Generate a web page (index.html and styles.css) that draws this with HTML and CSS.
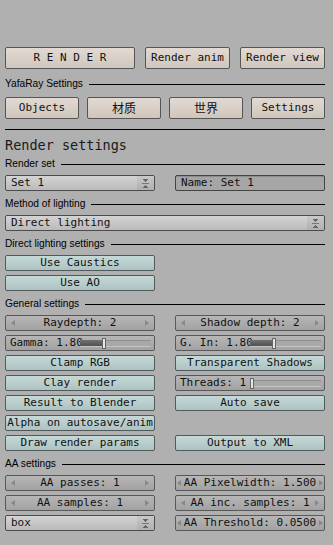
FILE: index.html
```html
<!DOCTYPE html>
<html lang="en">
<head>
  <meta charset="UTF-8">
  <meta name="viewport" content="width=device-width,initial-scale=1.0">
  <title>YafaRay Settings</title>
  <link rel="stylesheet" href="styles.css">
</head>
<body>

<div class="panel">

  <!-- render buttons -->
  <div class="row top">
    <div class="btn beige">R E N D E R</div>
    <div class="btn beige">Render anim</div>
    <div class="btn beige">Render view</div>
  </div>

  <div class="label first">YafaRay Settings</div>
  <div class="row tabs">
    <div class="btn beige">Objects</div>
    <div class="btn beige cjk">材质</div>
    <div class="btn beige cjk">世界</div>
    <div class="btn beige">Settings</div>
  </div>

  <div class="rule"></div>
  <div class="title">Render settings</div>

  <!-- Render set -->
  <div class="label">Render set</div>
  <div class="row">
    <div class="btn menu"><span>Set 1</span><i class="updown"></i></div>
    <div class="btn field">Name: Set 1</div>
  </div>

  <div class="label">Method of lighting</div>
  <div class="row one">
    <div class="btn menu"><span>Direct lighting</span><i class="updown"></i></div>
  </div>

  <div class="label">Direct lighting settings</div>
  <div class="row">
    <div class="btn tog">Use Caustics</div>
  </div>
  <div class="row">
    <div class="btn tog">Use AO</div>
  </div>

  <!-- General -->
  <div class="label">General settings</div>
  <div class="row">
    <div class="btn num"><i class="arr l"></i><span>Raydepth: 2</span><i class="arr r"></i></div>
    <div class="btn num"><i class="arr l"></i><span>Shadow depth: 2</span><i class="arr r"></i></div>
  </div>
  <div class="row">
    <div class="btn slider"><span class="val">Gamma: 1.80</span><span class="track"><span class="fill" style="width:22px"></span><span class="knob"></span></span></div>
    <div class="btn slider"><span class="val">G. In: 1.80</span><span class="track"><span class="fill" style="width:22px"></span><span class="knob"></span></span></div>
  </div>
  <div class="row">
    <div class="btn tog">Clamp RGB</div>
    <div class="btn tog">Transparent Shadows</div>
  </div>
  <div class="row">
    <div class="btn tog">Clay render</div>
    <div class="btn slider"><span class="val">Threads: 1</span><span class="track"><span class="fill" style="width:0"></span><span class="knob"></span></span></div>
  </div>
  <div class="row">
    <div class="btn tog">Result to Blender</div>
    <div class="btn tog">Auto save</div>
  </div>
  <div class="row">
    <div class="btn tog">Alpha on autosave/anim</div>
  </div>
  <div class="row">
    <div class="btn tog">Draw render params</div>
    <div class="btn tog">Output to XML</div>
  </div>

  <!-- AA -->
  <div class="label">AA settings</div>
  <div class="row">
    <div class="btn num"><i class="arr l"></i><span>AA passes: 1</span><i class="arr r"></i></div>
    <div class="btn num tight"><i class="arr l"></i><span>AA Pixelwidth: 1.500</span><i class="arr r"></i></div>
  </div>
  <div class="row">
    <div class="btn num"><i class="arr l"></i><span>AA samples: 1</span><i class="arr r"></i></div>
    <div class="btn num"><i class="arr l"></i><span>AA inc. samples: 1</span><i class="arr r"></i></div>
  </div>
  <div class="row">
    <div class="btn menu"><span>box</span><i class="updown"></i></div>
    <div class="btn num tight"><i class="arr l"></i><span>AA Threshold: 0.0500</span><i class="arr r"></i></div>
  </div>

</div>

</body>
</html>
```

FILE: styles.css
```css
body { margin:0; background:#b0b0b0; color:#000;
  font-family:"DejaVu Sans Mono", "Noto Sans CJK SC", monospace; font-size:11px; }

.panel { width:320px; margin-left:5px; padding-top:47px; }

/* rows */
.row { display:grid; grid-template-columns:150px 150px; column-gap:20px; margin-bottom:4px; }
.row.one { grid-template-columns:320px; }
.row.top { grid-template-columns:130px 85px 85px; column-gap:10px; margin-bottom:0; }
.row.tabs { grid-template-columns:repeat(4, 74px); column-gap:8px; margin-bottom:0; }

/* section labels */
.label { display:flex; align-items:center; height:20px; line-height:18px; padding-bottom:2px; box-sizing:border-box;
  font-family:"Liberation Sans", Arial, sans-serif; font-size:10.2px; }
.label::after { content:""; flex:1; height:1px; background:#000; margin-left:6px; }
.label.first { height:14px; padding:0; margin:8px 0 6px; }

.rule { height:1px; background:#000; margin-top:10px; }
.title { height:25px; box-sizing:border-box; padding-top:8px; line-height:14px; font-size:13.5px; color:#1a1a1a; }

/* buttons */
.btn { height:16px; box-sizing:border-box; border:1px solid #4c4c4c; border-radius:2px;
  line-height:14px; text-align:center; white-space:nowrap; overflow:hidden; color:#111; }
.top .btn, .tabs .btn { height:22px; line-height:20px; }
.beige { background:linear-gradient(#e2dad2, #cfc6bd); border-color:#555; }
.cjk { font-family:"Noto Sans CJK SC", sans-serif; font-size:12px; }
.tog { background:linear-gradient(#c6d9d9, #aec2c2); border-color:#505a5a; }

.menu { display:flex; text-align:left; background:linear-gradient(#d4d4d4, #bababa); }
.menu span { flex:1; padding-left:5px; }
.updown { width:17px; background:linear-gradient(#c8c8c8, #b0b0b0);
  display:flex; align-items:center; justify-content:center; }
.updown::before { content:""; width:7px; height:9px;
  background:
    linear-gradient(to top right, transparent 50%, #666 50%) 0 0 / 4px 3px no-repeat,
    linear-gradient(to top left, transparent 50%, #666 50%) 3px 0 / 4px 3px no-repeat,
    linear-gradient(#777, #777) 0 4px / 7px 1px no-repeat,
    linear-gradient(to bottom right, transparent 50%, #666 50%) 0 6px / 4px 3px no-repeat,
    linear-gradient(to bottom left, transparent 50%, #666 50%) 3px 6px / 4px 3px no-repeat; }

.field { text-align:left; padding-left:5px; background:#a6a6a6; border-color:#444;
  box-shadow:inset 0 1px 0 #8c8c8c; }

.num { display:flex; align-items:center; padding:0 5px;
  background:linear-gradient(#b6b6b6, #a2a2a2); border-color:#585858; }
.num span { flex:1; text-align:center; }
.num.tight { padding:0 1px; }
.arr { width:0; height:0; border-top:3.5px solid transparent; border-bottom:3.5px solid transparent; }
.arr.l { border-right:4px solid #888; }
.arr.r { border-left:4px solid #888; }

/* sliders: value text on the left half, track on the right half */
.slider { display:flex; align-items:center; text-align:left; padding:0 3px 0 4px;
  background:linear-gradient(#b6b6b6, #a2a2a2); border-color:#585858; }
.val { width:70px; flex:none; overflow:visible; }
.track { flex:1; display:flex; align-items:center; height:5px; position:relative;
  background:#a8a8a8; border-top:1px solid #8e8e8e; border-bottom:1px solid #c4c4c4; }
.fill { height:6px; background:linear-gradient(#727272, #505050); }
.knob { width:2px; height:9px; background:#e6e6e6; border:1px solid #666; }
```
